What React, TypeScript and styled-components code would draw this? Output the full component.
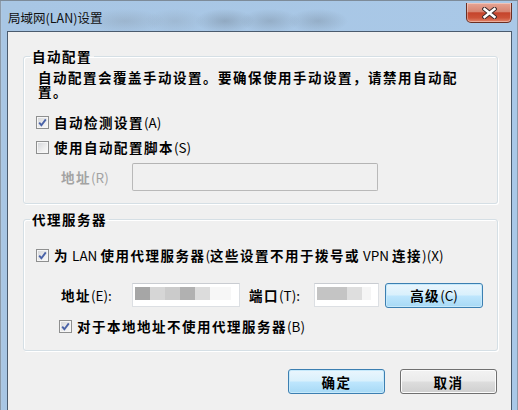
import React, { FC } from 'react';
import styled, { createGlobalStyle, css } from 'styled-components';

const CJK = /([\u3000-\u303f\u4e00-\u9fff\uff00-\uffef]+)/;

type TextProps = {
  text: string;
};

// CJK runs get the heavy bitmap-like look, latin stays regular
const Label: FC<TextProps> = ({ text }): JSX.Element => (
  <>
    {text.split(CJK).map((part, i) =>
      CJK.test(part) ? <Han key={i}>{part}</Han> : <Latin key={i}>{part}</Latin>
    )}
  </>
);

type CheckProps = {
  checked?: boolean;
  text: string;
  indent?: number;
};

const CheckItem: FC<CheckProps> = ({ checked, text, indent = 0 }): JSX.Element => (
  <CheckRow indent={indent}>
    <Box>
      {checked && (
        <svg width="11" height="11" viewBox="0 0 11 11">
          <path d="M2.2 5.6 L4.4 8.2 L8.8 2.4" fill="none" stroke="#4a63a8" strokeWidth="1.9" />
        </svg>
      )}
    </Box>
    <span>
      <Label text={text} />
    </span>
  </CheckRow>
);

const App: FC = (): JSX.Element => {
  return (
    <>
      <GlobalStyle />
      <Window>
        <TitleBar>
          <Title>局域网(LAN)设置</Title>
          <CloseButton>
            <svg width="15" height="12" viewBox="0 0 15 12">
              <path d="M2.5 2 L12.5 10 M12.5 2 L2.5 10" stroke="#3b2a2a" strokeWidth="4.4" strokeLinecap="square" />
              <path d="M2.5 2 L12.5 10 M12.5 2 L2.5 10" stroke="#ffffff" strokeWidth="2.4" strokeLinecap="square" />
            </svg>
          </CloseButton>
        </TitleBar>
        <Client>
          <GroupBox>
            <Legend>
              <Label text="自动配置" />
            </Legend>
            <Description>
              <Label text="自动配置会覆盖手动设置。要确保使用手动设置，请禁用自动配置。" />
            </Description>
            <CheckGroup>
              <CheckItem checked text="自动检测设置(A)" />
              <CheckItem text="使用自动配置脚本(S)" />
            </CheckGroup>
            <ScriptRow>
              <FieldLabel disabled width={71}>
                <Label text="地址(R)" />
              </FieldLabel>
              <TextField width={246} height={28} disabled />
            </ScriptRow>
          </GroupBox>

          <ProxyBox>
            <Legend>
              <Label text="代理服务器" />
            </Legend>
            <ProxyCheck>
              <CheckItem checked text="为 LAN 使用代理服务器(这些设置不用于拨号或 VPN 连接)(X)" />
            </ProxyCheck>
            <ProxyRow>
              <FieldLabel width={71}>
                <Label text="地址(E):" />
              </FieldLabel>
              <TextField width={108} height={24}>
                <AddressSmudge />
              </TextField>
              <PortLabel width={65}>
                <Label text="端口(T):" />
              </PortLabel>
              <TextField width={65} height={24}>
                <PortSmudge />
              </TextField>
              <AdvancedButton isDefault>
                <Label text="高级(C)" />
              </AdvancedButton>
            </ProxyRow>
            <BypassCheck>
              <CheckItem checked indent={23} text="对于本地地址不使用代理服务器(B)" />
            </BypassCheck>
          </ProxyBox>

          <ButtonRow>
            <DialogButton isDefault>
              <Label text="确定" />
            </DialogButton>
            <DialogButton>
              <Label text="取消" />
            </DialogButton>
          </ButtonRow>
        </Client>
      </Window>
    </>
  );
};

const GlobalStyle = createGlobalStyle`
  html, body {
    margin: 0;
    padding: 0;
  }

  body {
    width: 518px;
    height: 410px;
    overflow: hidden;
    background: #b4cde6;
    font-family: "Noto Sans CJK SC", "Liberation Sans", sans-serif;
    font-size: 14px;
    line-height: 16px;
    color: #000;
  }
`;

const Han = styled.span`
  font-size: 13.5px;
  font-weight: 700;
  letter-spacing: 1.5px;
`;

const Latin = styled.span`
  font-weight: 400;
  font-size: 13.5px;
`;

const Window = styled.div`
  width: 518px;
  height: 410px;
  box-sizing: border-box;
  padding: 0 6px 0 7px;
  display: flex;
  flex-direction: column;
  border-top: 1px solid #7d8b99;
  background:
    radial-gradient(ellipse 40px 12px at 125px 20px, rgba(120, 130, 140, 0.25), transparent),
    radial-gradient(ellipse 30px 12px at 175px 20px, rgba(120, 130, 140, 0.2), transparent),
    radial-gradient(ellipse 30px 12px at 225px 20px, rgba(90, 100, 110, 0.3), transparent),
    radial-gradient(ellipse 30px 12px at 270px 20px, rgba(90, 100, 110, 0.25), transparent),
    radial-gradient(ellipse 30px 12px at 318px 20px, rgba(90, 100, 110, 0.25), transparent),
    linear-gradient(to right, #c2cfdc 0, #a8c6e4 2px, #a9c8e7 100%);
  box-shadow: inset 1px 0 0 #8c9aa9, inset -1px 0 0 #8c9aa9;
`;

const TitleBar = styled.div`
  height: 30px;
  flex-shrink: 0;
  display: flex;
  align-items: flex-start;
  justify-content: space-between;
`;

const Title = styled.div`
  margin: 9px 0 0 1px;
  font-size: 12.5px;
  line-height: 15px;
  color: #111;
`;

const CloseButton = styled.div`
  width: 46px;
  height: 20px;
  margin-top: 2px;
  box-sizing: border-box;
  display: flex;
  align-items: center;
  justify-content: center;
  border: 1px solid #6b2e22;
  border-top: none;
  border-radius: 0 0 5px 5px;
  background: linear-gradient(#e6a595 0%, #d78572 45%, #c5442c 52%, #cc5238 78%, #e3876d 100%);
  box-shadow: inset 0 0 0 1px rgba(255, 255, 255, 0.35);
`;

const Client = styled.div`
  flex: 1;
  display: flex;
  flex-direction: column;
  padding: 16px 13px 0 15px;
  background: #f0f0f0;
  border: 1px solid #4a5b6e;
  border-bottom: none;
`;

const GroupBox = styled.fieldset`
  margin: 0;
  min-width: 0;
  padding: 0 0 12px 13px;
  border: 1px solid #d5dfe5;
  border-radius: 3px;
  box-shadow: inset 1px 1px 0 #ffffff, 1px 1px 0 #ffffff;
`;

const ProxyBox = styled(GroupBox)`
  margin-top: 7px;
  padding-bottom: 14px;
`;

const Legend = styled.legend`
  margin-left: -7px;
  padding: 0 2px 0 2px;
  line-height: 16px;
  height: 16px;
`;

const Description = styled.div`
  width: 432px;
  margin-top: 6px;
  padding-left: 1px;
  line-height: 14px;
  line-break: strict;
`;

const CheckGroup = styled.div`
  margin-top: 14px;
  display: flex;
  flex-direction: column;
  gap: 5px;
`;

const CheckRow = styled.div<{ indent: number }>`
  height: 20px;
  display: flex;
  align-items: center;
  gap: 5px;
  margin-left: ${({ indent }) => indent - 1}px;
  white-space: nowrap;
`;

const Box = styled.span`
  width: 13px;
  height: 13px;
  box-sizing: border-box;
  flex-shrink: 0;
  display: flex;
  align-items: center;
  justify-content: center;
  border: 1px solid #8e8f8f;
  background: linear-gradient(135deg, #d2d4d8 0%, #eeeeee 60%, #fafafa 100%);
  box-shadow: inset 0 0 0 1px #f6f6f6;
`;

const ScriptRow = styled.div`
  margin: 6px 0 0 24px;
  display: flex;
  align-items: center;
`;

const ProxyRow = styled.div`
  margin: 17px 0 0 24px;
  height: 26px;
  display: flex;
  align-items: center;
`;

const FieldLabel = styled.div<{ width: number; disabled?: boolean }>`
  width: ${({ width }) => width}px;
  flex-shrink: 0;
  color: ${({ disabled }) => (disabled ? '#a3a3a3' : '#000')};
  white-space: nowrap;
`;

const PortLabel = styled(FieldLabel)`
  margin-left: 9px;
`;

const TextField = styled.div<{ width: number; height: number; disabled?: boolean }>`
  width: ${({ width }) => width}px;
  height: ${({ height }) => height}px;
  box-sizing: border-box;
  flex-shrink: 0;
  padding: 3px 0 0 2px;
  border: 1px solid ${({ disabled }) => (disabled ? '#b9b9b9' : '#dcdfe3')};
  border-top-color: ${({ disabled }) => (disabled ? '#b4b4b4' : '#c9ccd1')};
  background: ${({ disabled }) => (disabled ? '#f0f0f0' : '#ffffff')};
  ${({ disabled }) =>
    disabled &&
    css`
      border-radius: 2px;
    `}
`;

const AddressSmudge = styled.div`
  width: 96px;
  height: 13px;
  filter: blur(0.6px);
  background: linear-gradient(
    to right,
    #a6a6a6 0 15px,
    #d6d6d6 15px 30px,
    #cbcbcb 30px 45px,
    #b1b1b1 45px 60px,
    #dcdcdc 60px 75px,
    #f7f7f7 75px 96px
  );
`;

const PortSmudge = styled.div`
  width: 54px;
  height: 13px;
  filter: blur(0.6px);
  background: linear-gradient(to right, #c4c4c4 0 30px, #dedede 30px 45px, #f5f5f5 45px 54px);
`;

const buttonLook = css<{ isDefault?: boolean }>`
  height: 25px;
  box-sizing: border-box;
  display: flex;
  align-items: center;
  justify-content: center;
  border-radius: 3px;
  white-space: nowrap;
  border: 1px solid ${({ isDefault }) => (isDefault ? '#3c7fb1' : '#707070')};
  background: ${({ isDefault }) =>
    isDefault
      ? 'linear-gradient(#eaf6fd 0%, #d9f0fc 48%, #bee6fd 52%, #a7d9f5 100%)'
      : 'linear-gradient(#f2f2f2 0%, #ebebeb 48%, #dddddd 52%, #cfcfcf 100%)'};
  box-shadow: inset 0 0 0 1px ${({ isDefault }) => (isDefault ? '#c6e9fb' : '#fcfcfc')};
`;

const AdvancedButton = styled.div<{ isDefault?: boolean }>`
  ${buttonLook};
  width: 98px;
  margin-left: 6px;
`;

const ProxyCheck = styled.div`
  margin-top: 18px;
`;

const BypassCheck = styled.div`
  margin-top: 8px;
`;

const ButtonRow = styled.div`
  margin: 18px 1px 0 0;
  display: flex;
  justify-content: flex-end;
  gap: 15px;
`;

const DialogButton = styled.div<{ isDefault?: boolean }>`
  ${buttonLook};
  width: 97px;
`;

export default App;
